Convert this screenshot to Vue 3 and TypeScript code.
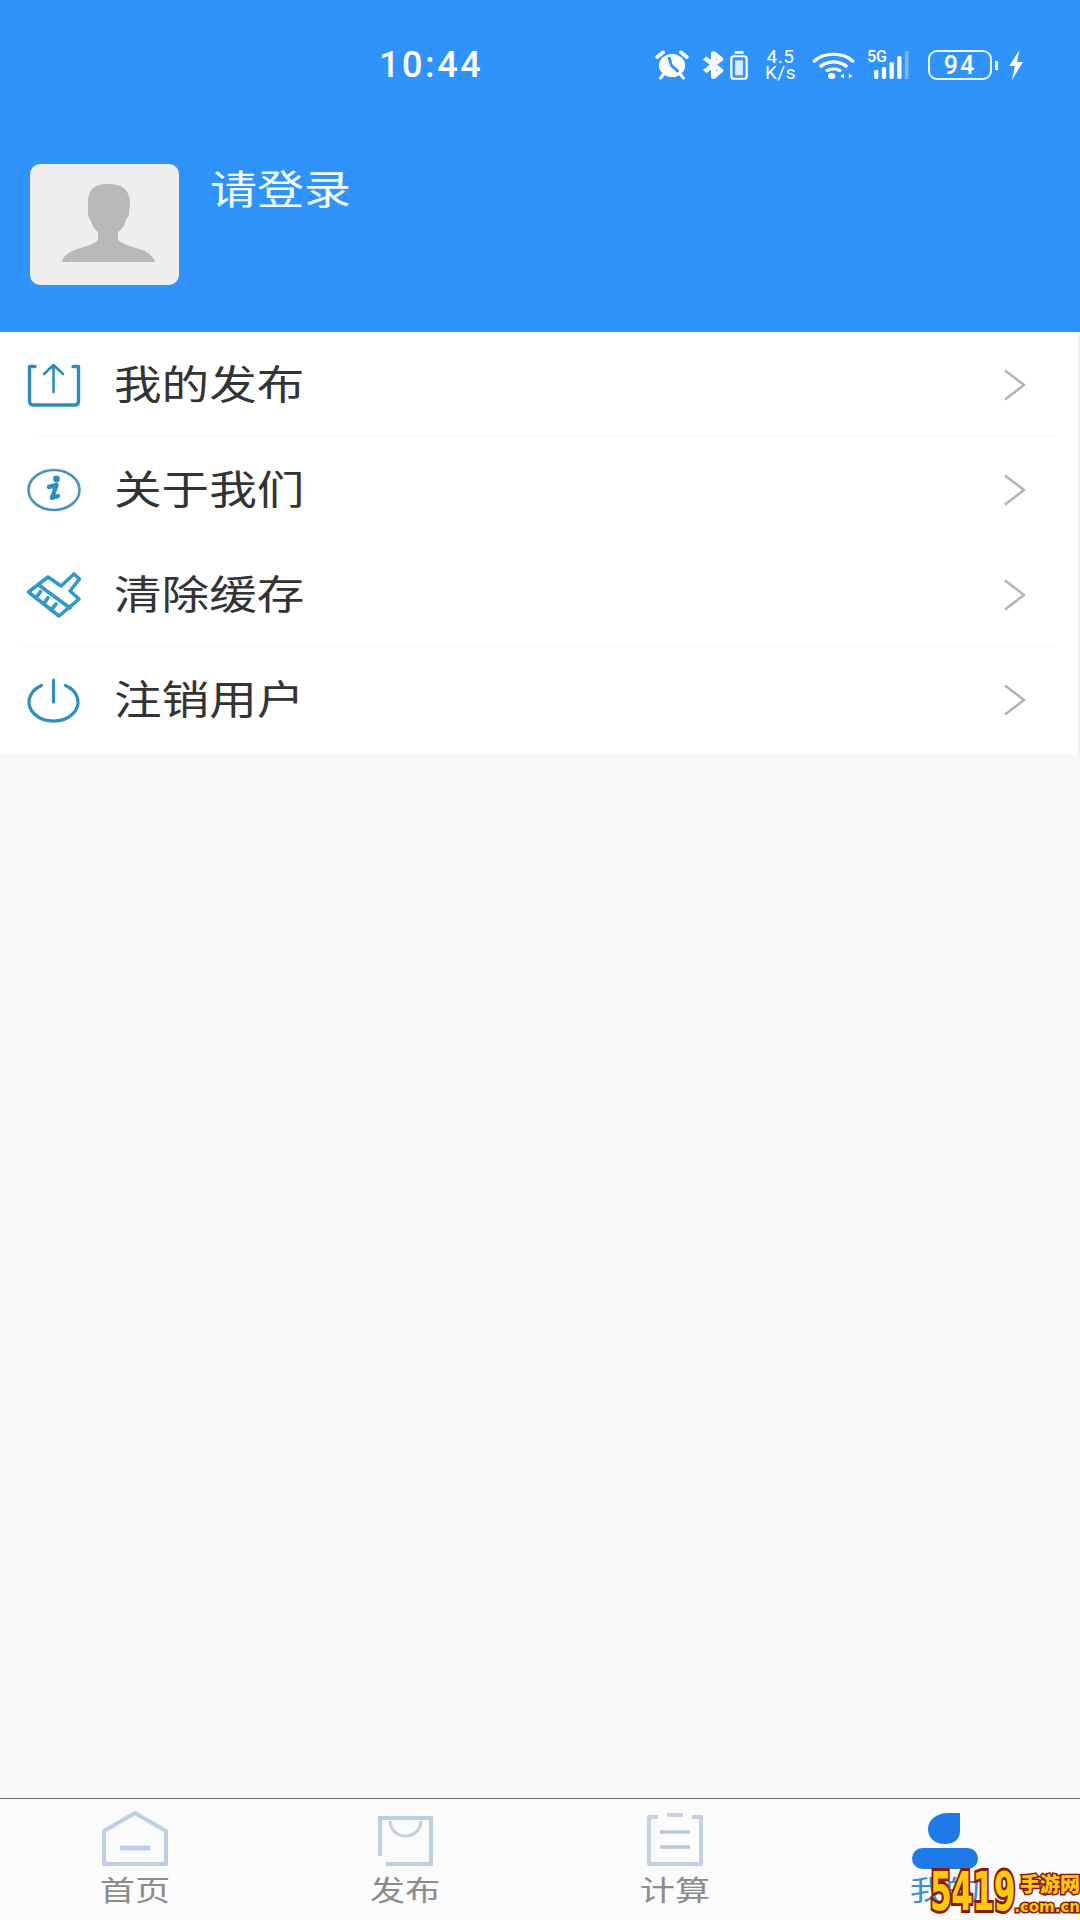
<script setup lang="ts">
interface MenuRow {
  label: string
  icon: 'upload' | 'info' | 'broom' | 'power'
  divider: string
}
const rows: MenuRow[] = [
  { label: '我的发布', icon: 'upload', divider: 'inset-a' },
  { label: '关于我们', icon: 'info', divider: '' },
  { label: '清除缓存', icon: 'broom', divider: 'inset-b' },
  { label: '注销用户', icon: 'power', divider: '' },
]
const tabs = [
  { label: '首页', icon: 'home' },
  { label: '发布', icon: 'bag' },
  { label: '计算', icon: 'note' },
  { label: '我的', icon: 'me' },
]
</script>

<template>
  <div class="page">
    <header class="hero">
      <div class="status">
        <span class="time">10:44</span>
        <svg class="alarm" width="34" height="30" viewBox="0 0 30 30" preserveAspectRatio="none">
          <path d="M2 7 L7 2.500 M23 2.500 L28 7" stroke="#fff" stroke-width="3.600" stroke-linecap="round" />
          <circle cx="15" cy="15.500" r="11.500" fill="#fff" />
          <path d="M7 25 L5 28 M23 25 L25 28" stroke="#fff" stroke-width="3" stroke-linecap="round" />
          <path d="M12.500 8 L14.500 15.500 L20 21" fill="none" stroke="#3092fb" stroke-width="2.600" stroke-linecap="round" />
        </svg>
        <svg class="bt" width="23" height="30" viewBox="0 0 17 28" preserveAspectRatio="none">
          <path d="M2 7.500 L14 19 L8.500 25 V3 L14 8.500 L2 20" fill="none" stroke="#fff" stroke-width="3.800" stroke-linejoin="round" />
        </svg>
        <svg class="cell" width="18" height="30" viewBox="0 0 16 29" preserveAspectRatio="none">
          <rect x="4" y="1" width="8" height="2.600" fill="#fff" />
          <rect x="1.200" y="6" width="13.600" height="21.800" rx="2.500" fill="none" stroke="#fff" stroke-width="2" />
          <rect x="4.500" y="10" width="7" height="14.500" fill="#d8ebff" />
        </svg>
        <div class="speed"><span>4.5</span><span>K/s</span></div>
        <svg class="wifi" width="43" height="30" viewBox="0 0 35 30" preserveAspectRatio="none">
          <path d="M2 11 C10 2 25 2 33 11 M7.500 16 C13 10.500 22 10.500 27.500 16 M12.500 20.500 C15 18.500 20 18.500 22.500 20.500" fill="none" stroke="#fff" stroke-width="3.200" stroke-linecap="round" />
          <circle cx="16" cy="26" r="3" fill="#fff" />
          <path d="M23 26 L26 23.500 V28.500 Z M33 26 L30 23.500 V28.500 Z" fill="#fff" />
        </svg>
        <div class="signal">
          <span class="five">5G</span>
          <svg width="45" height="30" viewBox="0 0 38 30" preserveAspectRatio="none">
            <rect x="6" y="20" width="3.600" height="9" rx="1.600" fill="#fff" />
            <rect x="12.500" y="17" width="3.600" height="12" rx="1.600" fill="#fff" />
            <rect x="19" y="12" width="3.600" height="17" rx="1.600" fill="#fff" />
            <rect x="25.500" y="6" width="3.600" height="23" rx="1.600" fill="#fff" />
            <rect x="32" y="1" width="3" height="28" fill="#fff" opacity=".35" />
          </svg>
        </div>
        <div class="batt"><span>94</span></div>
        <i class="nub"></i>
        <svg class="bolt" width="16" height="30" viewBox="0 0 14 30" preserveAspectRatio="none">
          <path d="M10 0 L1 16 H6 L3.500 30 L13 12 H8 Z" fill="#fff" />
        </svg>
      </div>
      <div class="profile">
        <div class="avatar">
          <svg width="94" height="80" viewBox="0 0 94 80">
            <path d="M47 0 C34 0 27 5 27 19 C27 25 27 27 27 30 C26.500 32 28 34 29 35 C31 41 34 46 37 48 V56 C34 60 22 63 14 66 C8 68 2 72 1 78 H94 C92 72 87 68 81 66 C72 63 61 60 57 56 V48 C61 46 64 41 65 35 C67 34 68 32 68 30 C68 26 69 24 69 19 C69 5 60 0 47 0 Z" fill="#b8b8b8" />
          </svg>
        </div>
        <span class="login">请登录</span>
      </div>
    </header>

    <section class="menu">
      <div v-for="row in rows" :key="row.label" class="row" :class="row.divider">
        <svg class="row-icon" width="54" height="46" viewBox="0 0 54 46">
          <g v-if="row.icon === 'upload'" fill="none" stroke="#2b8db9" stroke-width="3.400" stroke-linejoin="round" stroke-linecap="round">
            <path d="M8 4.500 H2.500 V39 Q2.500 43 6 43 H48 Q51.500 43 51.500 39 V4.500 H46" />
            <path d="M26.500 30 V3 M17 12 L26.500 3 L36 12" stroke-width="2.600" />
          </g>
          <g v-else-if="row.icon === 'info'">
            <ellipse cx="27" cy="23" rx="25.500" ry="20" fill="none" stroke="#4a94b8" stroke-width="2.600" />
            <circle cx="29.500" cy="12" r="3.400" fill="#2a8fc6" />
            <path d="M22 20 L29.500 18 L25 31 L31 29" fill="none" stroke="#2a8fc6" stroke-width="4.400" stroke-linejoin="round" stroke-linecap="round" />
          </g>
          <g v-else-if="row.icon === 'broom'" fill="none" stroke="#2f9ac9" stroke-width="3.600" stroke-linejoin="round" stroke-linecap="round">
            <path d="M1.500 20 L21 5 L34 14 L47 2 L52.500 7 L43 19 L52 27 L32 44 Z" />
            <path d="M11 12.500 L43 36" />
            <path d="M8.750 26 L13.500 19.600 M16.500 32 L21 25.600 M24 38 L29 32" />
          </g>
          <g v-else fill="none" stroke="#2e8fbc" stroke-width="3.200" stroke-linecap="round">
            <path d="M14.500 8.500 A24.500 19 0 1 0 38.500 8.500" />
            <path d="M26.500 3 V25" />
          </g>
        </svg>
        <span class="row-label">{{ row.label }}</span>
        <svg class="chev" width="22" height="32" viewBox="0 0 22 32">
          <path d="M1 1.500 L20 16 L1 30.500" fill="none" stroke="#b4b4b4" stroke-width="2.600" />
        </svg>
      </div>
    </section>

    <div class="spacer"></div>

    <nav class="tabs">
      <div v-for="(tab, i) in tabs" :key="tab.label" class="tab" :class="{ on: i === 3 }">
        <svg class="tab-icon" width="70" height="56" viewBox="0 0 70 56">
          <g v-if="tab.icon === 'home'" fill="none" stroke="#bccfe6" stroke-width="4" stroke-linejoin="round">
            <path d="M4 20 L35 2 L66 20 V53 H4 Z" />
            <path d="M22 37 H48" stroke-width="5" stroke-linecap="round" />
          </g>
          <g v-else-if="tab.icon === 'bag'" fill="none" stroke="#bcd0e4" stroke-width="4">
            <path d="M10 45 V7 H61 V53 H16" />
            <path d="M20 10 C21 30 50 30 51 10" stroke-width="3" stroke="#c5cfe4" />
          </g>
          <g v-else-if="tab.icon === 'note'" fill="none" stroke="#c5d0e4" stroke-width="4" stroke-linejoin="round">
            <path d="M18 6 H9 V53 H61 V6 H52" />
            <path d="M27 4 H43" stroke-width="4" stroke="#cdd0e4" />
            <path d="M20 21 H50 M20 36 H50" stroke-width="3.400" stroke="#bcc9d4" />
          </g>
          <g v-else fill="#1f7ae8">
            <path d="M50 2 V20 C50 29 43 33 35 33 C25 33 18 27 18 18 C18 8 28 2 38 2 Z" />
            <rect x="2" y="37" width="66" height="21" rx="10.500" />
          </g>
        </svg>
        <span class="tab-label">{{ tab.label }}</span>
      </div>
      <div class="mark">
        <span class="mark-num">5419</span>
        <div class="mark-side">
          <span class="mark-cn">手游网</span>
          <span class="mark-en">.com.cn</span>
        </div>
      </div>
    </nav>
  </div>
</template>

<style>
html, body { margin: 0; padding: 0; }
</style>

<style scoped>
.page {
  width: 1080px;
  height: 1920px;
  display: flex;
  flex-direction: column;
  background: #f8f8f9;
  font-family: "Noto Sans CJK SC", "Noto Sans", sans-serif;
  overflow: hidden;
}
.hero {
  height: 332px;
  background: #3092fb;
  box-sizing: border-box;
  padding-top: 48px;
  flex: none;
}
.status {
  height: 34px;
  display: flex;
  align-items: center;
  padding-left: 379px;
  color: #fff;
}
.time {
  font-family: Roboto, sans-serif;
  font-size: 36px;
  font-weight: 500;
  letter-spacing: 2.600px;
  width: 276px;
  flex: none;
  line-height: 36px;
}
.alarm { flex: none; }
.bt { margin-left: 13px; flex: none; }
.cell { margin-left: 5px; flex: none; }
.speed {
  margin-left: 16px;
  width: 33px;
  flex: none;
  display: flex;
  flex-direction: column;
  align-items: center;
  font-family: Roboto, sans-serif;
  font-size: 19px;
  line-height: 16px;
  letter-spacing: .5px;
}
.wifi { margin-left: 15px; flex: none; }
.signal {
  margin-left: 12px;
  position: relative;
  width: 45px;
  height: 30px;
  flex: none;
}
.signal svg { display: block; }
.five {
  position: absolute;
  left: 0;
  top: -1px;
  font-family: Roboto, sans-serif;
  font-size: 16px;
  line-height: 16px;
  font-weight: 500;
}
.batt {
  margin-left: 16px;
  width: 64px;
  height: 30px;
  flex: none;
  box-sizing: border-box;
  border: 2.500px solid #eaf5ff;
  border-radius: 9px;
  display: flex;
  align-items: center;
  justify-content: center;
  font-family: Roboto, sans-serif;
  font-weight: 500;
  font-size: 25px;
  letter-spacing: 2px;
}
.nub {
  width: 3px;
  height: 9px;
  background: #fff;
  margin-left: 3px;
  flex: none;
}
.bolt { margin-left: 10px; flex: none; }
.profile {
  display: flex;
  align-items: flex-start;
  margin-top: 82px;
  padding-left: 30px;
}
.avatar {
  width: 149px;
  height: 121px;
  border-radius: 10px;
  background: #eeeeee;
  display: flex;
  justify-content: center;
  align-items: center;
}
.avatar svg { margin-bottom: 2px; margin-left: 7px; }
.login {
  margin-left: 31px;
  margin-top: -3px;
  color: #f2fbff;
  font-size: 40px;
  line-height: 52px;
  transform: scaleX(1.175);
  transform-origin: left center;
}
.menu {
  background: #fff;
  flex: none;
  height: 422px;
  border-right: 2px solid #f2f2f4;
  box-sizing: border-box;
}
.row {
  height: 105px;
  display: flex;
  align-items: center;
  padding: 0 52px 0 27px;
  position: relative;
}
.row.inset-a::after,
.row.inset-b::after {
  content: "";
  position: absolute;
  right: 22px;
  bottom: 0;
  height: 1px;
  background: #f5f5f6;
}
.row.inset-a::after { left: 36px; }
.row.inset-b::after { left: 20px; }
.row-icon { flex: none; overflow: visible; }
.row-label {
  margin-left: 33px;
  margin-top: -5px;
  flex: 1;
  color: #333;
  font-size: 40px;
  line-height: 52px;
  transform: scaleX(1.19);
  transform-origin: left center;
}
.chev { flex: none; }
.spacer { flex: 1; }
.tabs {
  flex: none;
  height: 122px;
  box-sizing: border-box;
  border-top: 1px solid #6c6c6c;
  background: #fbfbfc;
  display: grid;
  grid-template-columns: repeat(4, 270px);
  position: relative;
}
.tab {
  display: flex;
  flex-direction: column;
  align-items: center;
  padding-top: 12px;
}
.tab-icon { flex: none; overflow: visible; }
.tab-label {
  margin-top: 4px;
  color: #8c8c8c;
  font-size: 28px;
  line-height: 36px;
  transform: scaleX(1.26);
}
.tab.on .tab-label { color: #3f8fc7; }
.mark {
  position: absolute;
  left: 930px;
  top: 66px;
  display: flex;
  align-items: flex-end;
  height: 54px;
  color: #ffc90e;
  font-family: "DejaVu Sans", sans-serif;
  font-weight: 700;
}
.mark-num {
  font-size: 54px;
  line-height: 54px;
  letter-spacing: -1px;
  width: 84px;
  flex: none;
  -webkit-text-stroke: 6px #8c1a08;
  paint-order: stroke fill;
  transform: scaleX(.58);
  transform-origin: left center;
}
.mark-side {
  display: flex;
  flex-direction: column;
  align-items: flex-end;
  width: 66px;
  flex: none;
}
.mark-cn {
  font-family: "Noto Sans CJK SC", sans-serif;
  font-size: 20px;
  line-height: 27px;
  font-weight: 900;
  -webkit-text-stroke: 3px #8c1a08;
  paint-order: stroke fill;
  white-space: nowrap;
}
.mark-en {
  font-size: 15px;
  line-height: 20px;
  -webkit-text-stroke: 3px #8c1a08;
  paint-order: stroke fill;
  white-space: nowrap;
  margin-bottom: 2px;
}
</style>
